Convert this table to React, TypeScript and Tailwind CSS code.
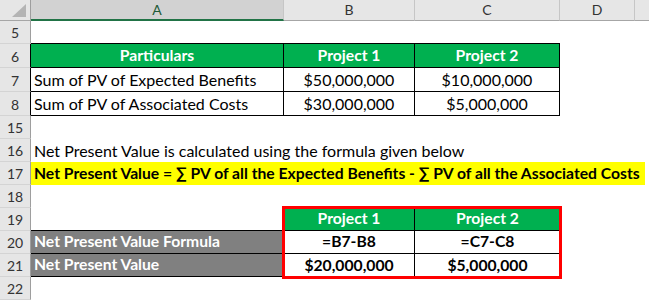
import React from "react";

function RowHead({ n, dark }: { n: number; dark?: boolean }) {
  return (
    <div
      className={`flex items-end justify-center pb-[3px] bg-[#e6e6e6] border-b border-[#d4d4d4] border-r ${
        dark ? "border-r-black" : "border-r-[#9e9e9e]"
      } text-[14px] leading-none text-[#333333]`}
    >
      {n}
    </div>
  );
}

function ColHead({ l, sel }: { l: string; sel?: boolean }) {
  return (
    <div
      className={`flex items-center justify-center text-[14px] leading-none border-r border-[#c6c6c6] ${
        sel
          ? "bg-[#d2d2d2] border-b-2 border-b-[#217346] text-[#1e5b37]"
          : "bg-[#e6e6e6] border-b border-b-[#a6a6a6] text-[#333333]"
      }`}
    >
      {l}
    </div>
  );
}

export default function App() {
  const cell = "flex items-end pb-[3px] leading-none whitespace-nowrap";
  const reg = "text-[16px]";
  const bold = "font-bold text-[15.7px]";
  return (
    <div
      className="w-[649px] h-[300px] overflow-hidden bg-white text-black"
      style={{ fontFamily: "Lato, 'Open Sans', sans-serif" }}
    >
      <div className="grid grid-cols-[31px_253px_131px_145px_75px_14px] grid-rows-[21px_23px_24px_24px_24px_23px_23px_23px_23px_23px_23px_23px_23px]">
        {/* header row */}
        <div className="bg-[#e6e6e6] border-r border-[#9e9e9e] border-b border-b-[#a6a6a6] flex items-end justify-end pr-[4px] pb-[3px]">
          <svg width="14" height="13" viewBox="0 0 14 13">
            <polygon points="0,13 14,13 14,0" fill="#b4b4b4" />
          </svg>
        </div>
        <ColHead l="A" sel />
        <ColHead l="B" />
        <ColHead l="C" />
        <ColHead l="D" />
        <div className="bg-[#e6e6e6] border-b border-b-[#a6a6a6]" />

        {/* row 5 */}
        <RowHead n={5} />
        <div className="border-b border-black" />
        <div className="border-b border-black" />
        <div className="border-b border-black" />
        <div />
        <div />

        {/* row 6 */}
        <RowHead n={6} dark />
        <div className={`${cell} justify-center bg-[#00b050] text-white ${bold} border-r border-b border-black`}>Particulars</div>
        <div className={`${cell} justify-center bg-[#00b050] text-white ${bold} border-r border-b border-black`}>Project 1</div>
        <div className={`${cell} justify-center bg-[#00b050] text-white ${bold} border-r border-b border-black`}>Project 2</div>
        <div />
        <div />

        {/* row 7 */}
        <RowHead n={7} dark />
        <div className={`${cell} pl-[3px] ${reg} border-r border-b border-black`}>Sum of PV of Expected Benefits</div>
        <div className={`${cell} justify-center ${reg} border-r border-b border-black`}>$50,000,000</div>
        <div className={`${cell} justify-center ${reg} border-r border-b border-black`}>$10,000,000</div>
        <div />
        <div />

        {/* row 8 */}
        <RowHead n={8} dark />
        <div className={`${cell} pl-[3px] ${reg} border-r border-b border-black`}>Sum of PV of Associated Costs</div>
        <div className={`${cell} justify-center ${reg} border-r border-b border-black`}>$30,000,000</div>
        <div className={`${cell} justify-center ${reg} border-r border-b border-black`}>$5,000,000</div>
        <div />
        <div />

        {/* row 15 */}
        <RowHead n={15} />
        <div className="col-span-5" />

        {/* row 16 */}
        <RowHead n={16} />
        <div className={`${cell} col-span-5 pl-[3px] ${reg}`}>Net Present Value is calculated using the formula given below</div>

        {/* row 17 */}
        <RowHead n={17} />
        <div className="col-span-5 flex">
          <div className={`${cell} w-[614px] bg-[#ffff00] pl-[3px] ${bold}`}>
            Net Present Value = ∑ PV of all the Expected Benefits - ∑ PV of all the Associated Costs
          </div>
        </div>

        {/* row 18 */}
        <RowHead n={18} />
        <div className="col-span-5" />

        {/* rows 19-21 */}
        <RowHead n={19} />
        <div className="border-b border-black" />
        <div className="col-span-2 row-span-3 relative">
          <div className="grid grid-cols-[131px_145px] grid-rows-[23px_23px_23px] h-full">
            <div className={`${cell} justify-center bg-[#00b050] text-white ${bold} border-r border-b border-black`}>Project 1</div>
            <div className={`${cell} justify-center bg-[#00b050] text-white ${bold} border-b border-black`}>Project 2</div>
            <div className={`${cell} justify-center ${bold} border-r border-b border-black`}>=B7-B8</div>
            <div className={`${cell} justify-center ${bold} border-b border-black`}>=C7-C8</div>
            <div className={`${cell} justify-center ${bold} border-r border-black`}>$20,000,000</div>
            <div className={`${cell} justify-center ${bold}`}>$5,000,000</div>
          </div>
          <div className="absolute inset-[-2px] border-[3px] border-[#ff0000] pointer-events-none" />
        </div>
        <div className="row-span-3" />
        <div className="row-span-3" />

        <RowHead n={20} />
        <div className={`${cell} pl-[3px] bg-[#808080] text-white ${bold} border-b border-black`}>Net Present Value Formula</div>

        <RowHead n={21} />
        <div className={`${cell} pl-[3px] bg-[#808080] text-white ${bold} border-b border-black`}>Net Present Value</div>

        {/* row 22 */}
        <RowHead n={22} />
        <div className="col-span-5" />
      </div>
    </div>
  );
}
